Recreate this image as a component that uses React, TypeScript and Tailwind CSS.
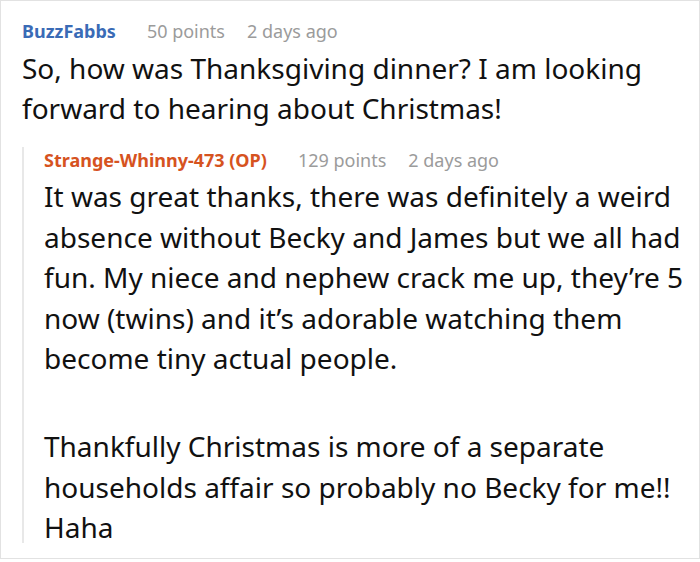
export default function App() {
  return (
    <div className="w-[700px] h-[562px] bg-white overflow-hidden" style={{ fontFamily: '"Noto Sans", "Open Sans", sans-serif' }}>
      <div className="h-[559px] border border-[#e2e2e2] pl-[21px] pt-[15px] pr-[8px]">
        <div className="flex items-center h-[30px] text-[18px] leading-[30px]">
          <span className="font-bold text-[#3a6bb6]">BuzzFabbs</span>
          <span className="ml-[31px] text-[#9b9b9b]">50 points</span>
          <span className="ml-[22px] text-[#9b9b9b]">2 days ago</span>
        </div>
        <div className="text-[28px] leading-[40px] text-[#111] mt-[2px]">
          So, how was Thanksgiving dinner? I am looking forward to hearing about Christmas!
        </div>
        <div className="mt-[19px] h-[396px] overflow-hidden border-l-2 border-[#e8e8e8] pl-[20px]">
          <div className="flex items-center h-[26px] text-[18px] leading-[26px]">
            <span className="font-bold text-[#d6531f]">Strange-Whinny-473 (OP)</span>
            <span className="ml-[31px] text-[#9b9b9b]">129 points</span>
            <span className="ml-[22px] text-[#9b9b9b]">2 days ago</span>
          </div>
          <div className="text-[28px] leading-[40.5px] text-[#111] mt-[3px]">
            <p>It was great thanks, there was definitely a weird absence without Becky and James but we all had fun. My niece and nephew crack me up, they’re 5 now (twins) and it’s adorable watching them become tiny actual people.</p>
            <p className="mt-[47.5px]">Thankfully Christmas is more of a separate households affair so probably no Becky for me!! Haha</p>
          </div>
        </div>
      </div>
    </div>
  );
}
